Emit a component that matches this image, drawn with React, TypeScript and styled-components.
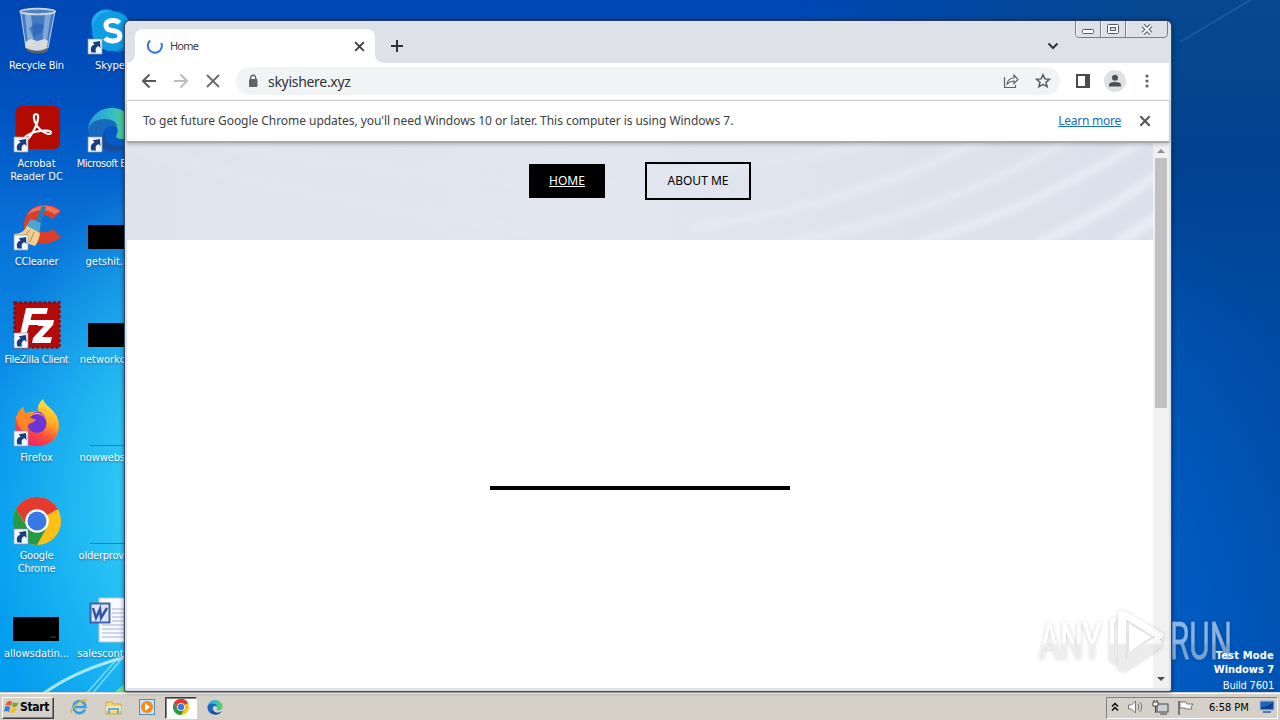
import React from "react";
import styled, { createGlobalStyle } from "styled-components";

const Global = createGlobalStyle`
  * { box-sizing: border-box; }
  html, body { margin: 0; padding: 0; overflow: hidden; }
  svg { display: block; flex: none; }
`;

const ui = `"DejaVu Sans Condensed", "DejaVu Sans", sans-serif`;
const web = `"Noto Sans", "Open Sans", sans-serif`;

const Screen = styled.div`
  position: relative;
  width: 1280px;
  height: 720px;
  display: flex;
  flex-direction: column;
  overflow: hidden;
  font-family: ${ui};
  font-size: 11px;
`;

const Desktop = styled.main`
  position: relative;
  height: 692px;
  flex: none;
  background:
    radial-gradient(ellipse 190px 330px at 175px 500px, #46dcf8 0%, rgba(50, 205, 246, 0.75) 38%, rgba(20, 170, 240, 0) 100%),
    linear-gradient(180deg, #0048b4 0%, #0050bf 14%, #0873d8 34%, #0a93ea 58%, #059fef 80%, #049cee 100%);
`;

const Dusk = styled.div`
  position: absolute;
  right: 0;
  top: 0;
  width: 480px;
  height: 692px;
  background:
    radial-gradient(ellipse 200px 420px at 320px 610px, rgba(0, 98, 204, 0.9), rgba(0, 80, 180, 0) 100%),
    linear-gradient(180deg, #07498f 0%, #004290 22%, #004ba4 50%, #0050b0 100%);
  mask-image: linear-gradient(90deg, transparent, #000 75%);
`;

const Rays = styled.svg`
  position: absolute;
  left: 0;
  top: 0;
`;

const IconGrid = styled.div`
  position: absolute;
  left: 0;
  top: 0;
  display: grid;
  grid-auto-flow: column;
  grid-template-rows: repeat(7, 98px);
  grid-template-columns: 73px 74px;
`;

const Shortcut = styled.div`
  display: flex;
  flex-direction: column;
  align-items: center;
  padding-top: 7px;
  white-space: nowrap;
`;

const Picture = styled.div`
  width: 48px;
  height: 48px;
  margin-left: 1px;
`;

const Label = styled.div<{ $ls?: number }>`
  margin-top: 4px;
  line-height: 13px;
  color: #fff;
  text-align: center;
  letter-spacing: ${(p) => p.$ls ?? 0}px;
  text-shadow: 0 1px 2px rgba(0, 20, 60, 0.45);
`;

const Window = styled.section`
  position: absolute;
  left: 124px;
  top: 20px;
  width: 1048px;
  height: 672px;
  display: flex;
  flex-direction: column;
  padding: 0 2px 3px;
  border: 1px solid #34495f;
  border-top-color: #20395c;
  border-radius: 6px 6px 3px 3px;
  background: #dee1e8;
  box-shadow: 0 0 4px rgba(0, 20, 50, 0.6);
  overflow: hidden;
`;

const TabStrip = styled.header`
  height: 42px;
  flex: none;
  display: flex;
  align-items: flex-end;
  padding-left: 8px;
  background: #dee1e8;
`;

const Tab = styled.div`
  position: relative;
  width: 240px;
  height: 34px;
  display: flex;
  align-items: center;
  padding: 0 9px 0 12px;
  border-radius: 8px 8px 0 0;
  background: #fff;
  color: #3c4043;
  &::before, &::after {
    content: "";
    position: absolute;
    bottom: 0;
    width: 8px;
    height: 8px;
  }
  &::before { left: -8px; background: radial-gradient(circle at 0 0, #dee1e8 7.5px, #fff 8px); }
  &::after { right: -8px; background: radial-gradient(circle at 100% 0, #dee1e8 7.5px, #fff 8px); }
`;

const TabTitle = styled.span`
  flex: 1;
  margin-left: 7px;
  padding-bottom: 2px;
  font-family: ${web};
  font-size: 11px;
  letter-spacing: -0.8px;
`;

const NewTab = styled.div`
  margin: 0 0 11px 16px;
`;

const TabSearch = styled.div`
  margin: 0 15px 12px auto;
`;

const Captions = styled.div`
  align-self: flex-start;
  display: flex;
  margin: -1px 1px 0 0;
  width: 93px;
  height: 18px;
  border: 1px solid #767e8a;
  border-radius: 0 0 4px 4px;
  overflow: hidden;
`;

const Caption = styled.div<{ $w: number }>`
  width: ${(p) => p.$w}px;
  display: flex;
  align-items: center;
  justify-content: center;
  box-shadow: inset 1px 0 0 #f4f6fa;
  & + & { border-left: 1px solid #767e8a; }
`;

const Toolbar = styled.div`
  height: 38px;
  flex: none;
  display: flex;
  align-items: center;
  padding: 0 0 1px 12px;
  background: #fff;
  border-bottom: 1px solid #d5d7da;
`;

const NavButtons = styled.div`
  display: flex;
  gap: 12px;
  width: 97px;
  flex: none;
`;

const Omnibox = styled.div`
  width: 824px;
  height: 28px;
  flex: none;
  display: flex;
  align-items: center;
  padding: 0 9px 0 11px;
  border-radius: 14px;
  background: #f1f3f4;
`;

const Url = styled.span`
  flex: 1;
  margin-left: 9px;
  color: #303134;
  font-family: ${web};
  font-size: 14px;
  letter-spacing: -0.3px;
`;

const OmniActions = styled.div`
  display: flex;
  gap: 16px;
`;

const ToolbarActions = styled.div`
  display: flex;
  align-items: center;
  gap: 14px;
  margin-left: 16px;
`;

const MenuDots = styled.svg`
  margin-left: 2px;
`;

const Infobar = styled.div`
  position: relative;
  z-index: 1;
  height: 42px;
  flex: none;
  display: flex;
  align-items: center;
  padding: 0 17px 1px 16px;
  background: #fff;
  border-bottom: 2px solid #a6a8a9;
  box-shadow: 0 1px 4px rgba(60, 64, 67, 0.35);
  color: #3c4043;
  font-family: ${web};
  font-size: 12px;
`;

const Message = styled.span`
  flex: 1;
  white-space: nowrap;
  letter-spacing: -0.05px;
`;

const Link = styled.span`
  margin-right: 17px;
  color: #1a69c8;
  text-decoration: underline;
  letter-spacing: -0.25px;
`;

const Viewport = styled.div`
  flex: 1;
  min-height: 0;
  display: flex;
  background: #fff;
`;

const Page = styled.div`
  flex: 1;
  display: flex;
  flex-direction: column;
  align-items: center;
`;

const Banner = styled.div`
  position: relative;
  width: 100%;
  height: 97px;
  flex: none;
  display: flex;
  justify-content: center;
  align-items: flex-start;
  gap: 40px;
  padding-top: 19px;
  background: linear-gradient(90deg, #dfe3ec, #e2e6ee 45%, #dfe3ec 70%, #dce0ec);
  overflow: hidden;
`;

const Streaks = styled.svg`
  position: absolute;
  left: 0;
  top: 0;
`;

const NavLink = styled.a<{ $current?: boolean }>`
  position: relative;
  display: flex;
  align-items: center;
  justify-content: center;
  width: ${(p) => (p.$current ? 76 : 106)}px;
  height: ${(p) => (p.$current ? 34 : 38)}px;
  margin-top: ${(p) => (p.$current ? 2 : 0)}px;
  padding-bottom: 1px;
  border: ${(p) => (p.$current ? "none" : "2px solid #000")};
  background: ${(p) => (p.$current ? "#000" : "transparent")};
  color: ${(p) => (p.$current ? "#fff" : "#000")};
  text-decoration: ${(p) => (p.$current ? "underline" : "none")};
  font-family: ${web};
  font-size: 12px;
  white-space: nowrap;
`;

const Divider = styled.div`
  width: 300px;
  height: 4px;
  margin-top: 246px;
  background: #000;
`;

const Scrollbar = styled.div`
  width: 16px;
  display: flex;
  flex-direction: column;
  align-items: center;
  background: #f1f1f1;
`;

const Arrow = styled.div<{ $down?: boolean }>`
  width: 16px;
  height: 15px;
  display: flex;
  align-items: center;
  justify-content: center;
  margin: ${(p) => (p.$down ? "auto 0 2px" : 0)};
`;

const Thumb = styled.div`
  width: 12px;
  height: 250px;
  background: #c1c1c1;
`;

const BuildInfo = styled.div`
  position: absolute;
  right: 6px;
  top: 649px;
  color: #fff;
  text-align: right;
  line-height: 14px;
  white-space: nowrap;
`;

const Strong = styled.div<{ $ls: number }>`
  font-weight: 700;
  letter-spacing: ${(p) => p.$ls}px;
`;

const BuildLine = styled.div`
  line-height: 18px;
  letter-spacing: -0.2px;
`;

const Watermark = styled.svg`
  position: absolute;
  left: 1030px;
  top: 602px;
`;

const Taskbar = styled.footer`
  flex: 1;
  display: flex;
  align-items: center;
  padding: 2px 2px 0 2px;
  background: #d5d0c8;
  border-top: 1px solid #d5d0c8;
  box-shadow: inset 0 1px 0 #fff;
`;

const Start = styled.div`
  width: 52px;
  height: 22px;
  display: flex;
  align-items: center;
  padding: 0 0 2px 1px;
  border: 1px solid;
  border-color: #fff #404040 #404040 #fff;
  box-shadow: inset -1px -1px 0 #808080;
  font-size: 12px;
  font-weight: 700;
  letter-spacing: -0.3px;
`;

const QuickLaunch = styled.div`
  display: flex;
  align-items: center;
  margin-left: 8px;
`;

const Slot = styled.div<{ $active?: boolean }>`
  width: ${(p) => (p.$active ? 32 : 34)}px;
  height: 22px;
  margin: ${(p) => (p.$active ? "0 1px" : 0)};
  padding-bottom: 1px;
  display: flex;
  align-items: center;
  justify-content: center;
  background: ${(p) => (p.$active ? "#fff" : "transparent")};
  border: ${(p) => (p.$active ? "1px solid" : "none")};
  border-color: #404040 #fff #fff #404040;
  box-shadow: ${(p) => (p.$active ? "inset 1px 1px 0 #808080" : "none")};
`;

const Tray = styled.div`
  width: 172px;
  height: 22px;
  margin-left: auto;
  display: flex;
  align-items: center;
  padding: 0 0 1px 4px;
  border: 1px solid;
  border-color: #808080 #fff #fff #808080;
`;

const TrayIcons = styled.div`
  display: flex;
  align-items: center;
  gap: 8px;
  width: 98px;
`;

const Clock = styled.div`
  width: 50px;
  white-space: nowrap;
  font-size: 11px;
`;

const LinkBadge = () => (
  <g transform="translate(1 32)">
    <rect width="14" height="15" fill="#f3f6fa" stroke="#8b9aac" strokeWidth=".7" />
    <path d="M3.500 13.500C1.800 9 3.600 6.500 6.500 5.500L4.800 3.200 12 2l.5 7-2.300-1.900C7.800 8.500 7 10.500 8 13.500z" fill="#173f7c" />
  </g>
);

const Art = ({ children, badge = true }: { children: React.ReactNode; badge?: boolean }) => (
  <Picture>
    <svg width="48" height="48" viewBox="0 0 48 48">
      {children}
      {badge && <LinkBadge />}
    </svg>
  </Picture>
);

const RecycleBin = () => (
  <Art badge={false}>
    <path d="M7.500 4 13 41q11 6 22 0L42 4z" fill="#6f9dcc" fillOpacity=".6" stroke="#b8d2ec" strokeWidth="1" />
    <path d="M12 7h6l3 32h-6z" fill="#d8eaf8" opacity=".45" />
    <path d="M32 7h6l-5 32h-4z" fill="#d8eaf8" opacity=".4" />
    <path d="m16 21 7-5 8 2-3 8-8 4z" fill="#1e5cae" opacity=".55" />
    <path d="m12 35 6-3 6 2 8-2 3 2-1 7q-10 5-21 0z" fill="#e6e3da" opacity=".9" />
    <path d="M13 41q11 6 22 0v3q-10 5-21 0z" fill="#59636c" />
    <ellipse cx="24.700" cy="4.500" rx="17.500" ry="2.800" fill="#4d83be" stroke="#ced6dd" strokeWidth="1.800" />
  </Art>
);

const Acrobat = () => (
  <Art>
    <rect x="2.500" y="1" width="44.500" height="43" rx="6" fill="#b30b00" />
    <path d="M12 35c-3-1 2-6 10-8s17-2 16 1-10-1-14-7-4-12-1-12 3 6-1 14-8 13-10 12z" fill="none" stroke="#fff" strokeWidth="2.200" />
  </Art>
);

const CCleaner = () => (
  <Art>
    <path d="M48 8C35-4 12 2 11 21s21 26 37 13l-8-8c-8 6-17 3-17-5s9-12 16-5z" fill="#dc3f29" />
    <path d="M47 8C35-1 19 2 14 12q15-9 28-.5z" fill="#ef7259" />
    <path d="m29 3 4 1-7 22-6-2z" fill="#267db5" />
    <path d="m18 16 10 4-2 11-14-6z" fill="#4fa5ce" />
    <path d="M14 23 27 30q-1 8-5 13L4 37 1 31q9 0 13-8z" fill="#f0cf91" />
    <path d="m17 27-8 8m12-6-4 10" stroke="#bd8c4a" fill="none" />
  </Art>
);

const FileZilla = () => (
  <Art>
    <rect x="1.500" y="1.500" width="45" height="45" fill="#b50a0a" stroke="#8e0b0b" strokeWidth="2.500" strokeDasharray="2.800 2" />
    <path d="M13 7h22l-1.500 6H19l-1.500 6H29l-1.500 5H16l-4 14H6z" fill="#fff" />
    <path d="M26 19h15l-1 5-11 12h10l-1.500 6H19l1-5 11-12h-6z" fill="#fff" />
  </Art>
);

const Firefox = () => (
  <Art>
    <defs>
      <linearGradient id="fox" x1=".8" y1="0" x2=".3" y2="1">
        <stop offset="0" stopColor="#fff04a" />
        <stop offset=".4" stopColor="#ffab26" />
        <stop offset=".7" stopColor="#ff4b3c" />
        <stop offset="1" stopColor="#ed1c72" />
      </linearGradient>
    </defs>
    <path d="M30 0q1 4 6 8 10 8 10 19c0 12-9 20-22 20S2 38 2 26q0-9 6-16l2-2 2 6 6-1q4-1 7-1-1-7 5-12z" fill="url(#fox)" />
    <circle cx="24" cy="24.500" r="9.500" fill="#6b35d9" />
    <path d="M18 15q11-4 15 6-1-5-5-8-5-2-10 2z" fill="#9b3fd4" />
    <path d="M3 18q4-9 7-10l2 6 7 0-2 4q1 2 6 2-1 3-5 4-5 2-3 8Q6 34 3 18z" fill="#ff8a24" opacity=".9" />
  </Art>
);

const ChromeArt = () => (
  <>
    <circle cx="24" cy="24" r="24" fill="#fbc116" />
    <path d="M24 24 3.200 12A24 24 0 0 1 44.800 12z" fill="#e33b2e" />
    <path d="M24 13h20.800A24 24 0 0 0 3.200 12L14.500 30z" fill="#e33b2e" />
    <path d="M3.200 12A24 24 0 0 0 24 48l10-18H14z" fill="#269a49" />
    <circle cx="24" cy="24" r="11.800" fill="#fff" />
    <circle cx="24" cy="24" r="9.500" fill="#3b78e7" />
  </>
);

const EdgeArt = ({ id }: { id: string }) => (
  <>
    <defs>
      <linearGradient id={id} x1="0" x2="1">
        <stop stopColor="#2699df" />
        <stop offset=".55" stopColor="#35bfc4" />
        <stop offset="1" stopColor="#65d34c" />
      </linearGradient>
    </defs>
    <path d="M1 24A23.500 23.500 0 0 1 47 20c1 9-5 14-12 14-5 0-7-2-5-5 2-4 0-9-6-9z" fill={`url(#${id})`} />
    <path d="M1 24q4-10 16-10 13 0 13 9-10-5-13 4-3 12 9 18Q3 49 1 24z" fill="#1769bd" />
    <path d="M18 26q-2 14 14 15 8 0 13-5-6 11-20 11Q7 44 18 26z" fill="#174e9b" />
  </>
);

const Skype = () => (
  <Art>
    <circle cx="19" cy="17" r="14.500" fill="#20aef0" />
    <circle cx="31" cy="30" r="15" fill="#087ecb" />
    <circle cx="25" cy="24" r="20" fill="#0c9de4" />
    <path d="M32.500 16q-3-3-7.500-2.500-6 .7-6 5t6.500 5q7.500 1 7.500 5.500 0 4.500-7 5-5.500 0-8-3" fill="none" stroke="#fff" strokeWidth="5" />
  </Art>
);

const Console = ({ mark }: { mark?: boolean }) => (
  <Art badge={false}>
    <rect x={mark ? 0 : 1} y="22" width="46" height="24" fill="#000" />
    {mark && <path d="M37 42h6" stroke="#444" />}
  </Art>
);

const ThinConsole = () => (
  <Art badge={false}>
    <path d="M3 46.500h45" stroke="#247c9c" />
  </Art>
);

const WordDoc = () => (
  <Art badge={false}>
    <path d="M12 3h36v44H12z" fill="#f8faff" stroke="#b8c8e0" />
    <path d="M25 14h20M25 18h20M25 22h20M25 26h20M15 30h30M15 34h30M15 38h30M15 42h30" stroke="#9fb3db" />
    <rect x="3.500" y="8.500" width="19" height="19" fill="#dce6f8" stroke="#3e62ae" strokeWidth="2" />
    <path d="m6 13 3 10 4-9 1 9 6-10" fill="none" stroke="#2f55a4" strokeWidth="2.500" />
  </Art>
);

const Cross = ({ size, stroke, color }: { size: number; stroke: number; color: string }) => (
  <svg width={size} height={size} viewBox="0 0 12 12">
    <path d="m2 2 8 8m0-8-8 8" stroke={color} strokeWidth={stroke} />
  </svg>
);

const shortcuts: { label: string[]; art: React.ReactNode; ls?: number }[] = [
  { label: ["Recycle Bin"], art: <RecycleBin />, ls: -0.2 },
  { label: ["Acrobat", "Reader DC"], art: <Acrobat /> },
  { label: ["CCleaner"], art: <CCleaner />, ls: -0.2 },
  { label: ["FileZilla Client"], art: <FileZilla />, ls: -0.35 },
  { label: ["Firefox"], art: <Firefox /> },
  { label: ["Google", "Chrome"], art: <Art><ChromeArt /></Art>, ls: -0.2 },
  { label: ["allowsdatin..."], art: <Console mark />, ls: -0.05 },
  { label: ["Skype"], art: <Skype /> },
  { label: ["Microsoft Edge"], art: <Art><EdgeArt id="edge-desktop" /></Art>, ls: -0.45 },
  { label: ["getshit.rtf"], art: <Console /> },
  { label: ["networkco..."], art: <Console />, ls: -0.05 },
  { label: ["nowwebsit..."], art: <ThinConsole />, ls: -0.1 },
  { label: ["olderprovid..."], art: <ThinConsole />, ls: -0.2 },
  { label: ["salescontra..."], art: <WordDoc />, ls: -0.05 },
];

export default function App() {
  return (
    <Screen>
      <Global />
      <Desktop>
        <Dusk />
        <Rays width="1280" height="692">
          <path d="M40 696Q75 670 126 657" stroke="#d8fbff" strokeWidth="3" opacity=".75" fill="none" />
          <path d="M86 694 116 660M92 694 124 656" stroke="#b8f5ff" strokeWidth="1.500" opacity=".6" />
          <path d="m115 692 10-9v9z" fill="#64e38b" />
          <path d="m1180 42 72-43" stroke="#5d9dd6" strokeWidth="2" opacity=".2" />
        </Rays>
        <IconGrid>
          {shortcuts.map((s) => (
            <Shortcut key={s.label[0]}>
              {s.art}
              <Label $ls={s.ls}>
                {s.label.map((line) => <div key={line}>{line}</div>)}
              </Label>
            </Shortcut>
          ))}
        </IconGrid>

        <Window>
          <TabStrip>
            <Tab>
              <svg width="16" height="16" viewBox="0 0 16 16">
                <path d="M3.200 2.500A7 7 0 1 0 14.300 5" fill="none" stroke="#3474e0" strokeWidth="2" />
              </svg>
              <TabTitle>Home</TabTitle>
              <Cross size={13} stroke={1.8} color="#3c4043" />
            </Tab>
            <NewTab>
              <svg width="12" height="12"><path d="M6 0v12M0 6h12" stroke="#303338" strokeWidth="2" /></svg>
            </NewTab>
            <TabSearch>
              <svg width="14" height="10"><path d="m2.500 2.500 4.500 4.500 4.500-4.500" fill="none" stroke="#303338" strokeWidth="2" /></svg>
            </TabSearch>
            <Captions>
              <Caption $w={24}>
                <svg width="14" height="12"><rect x="1.500" y="6.500" width="11" height="4" rx="1" fill="#fff" stroke="#535a66" /></svg>
              </Caption>
              <Caption $w={25}>
                <svg width="12" height="10"><rect x=".5" y=".5" width="11" height="9" rx="1" fill="#fff" stroke="#535a66" /><rect x="3.500" y="3.500" width="5" height="3" fill="#dee1e8" stroke="#535a66" /></svg>
              </Caption>
              <Caption $w={42}>
                <svg width="14" height="11"><path d="m3 1.500 8 8m0-8-8 8" stroke="#535a66" strokeWidth="4" /><path d="m3 1.500 8 8m0-8-8 8" stroke="#fff" strokeWidth="2" /></svg>
              </Caption>
            </Captions>
          </TabStrip>

          <Toolbar>
            <NavButtons>
              <svg width="20" height="20"><path d="M17 10H4m6.500-6.500L4 10l6.500 6.500" fill="none" stroke="#55595e" strokeWidth="2" /></svg>
              <svg width="20" height="20"><path d="M3 10h13M9.500 3.500 16 10l-6.500 6.500" fill="none" stroke="#babcbe" strokeWidth="2" /></svg>
              <svg width="20" height="20"><path d="m4 4 12 12m0-12L4 16" stroke="#65696e" strokeWidth="1.800" /></svg>
            </NavButtons>
            <Omnibox>
              <svg width="12" height="14"><rect x="2" y="5" width="8.500" height="8" rx="1" fill="#5f6368" /><path d="M3.700 6V3.800a2.500 2.500 0 0 1 5 0V6" fill="none" stroke="#5f6368" strokeWidth="1.400" /></svg>
              <Url>skyishere.xyz</Url>
              <OmniActions>
                <svg width="16" height="16"><path d="M1.500 4v10.500h11V12M4 11q1-6 7-6V2l4 4.500-4 4V8Q7 8 4 11z" fill="none" stroke="#5f6368" strokeWidth="1.200" /></svg>
                <svg width="16" height="16"><path d="m8 1.700 1.900 4.200 4.600.4-3.500 3 1.100 4.500L8 11.400l-4.100 2.400L5 9.300l-3.500-3 4.600-.4z" fill="none" stroke="#55595e" strokeWidth="1.500" /></svg>
              </OmniActions>
            </Omnibox>
            <ToolbarActions>
              <svg width="14" height="14"><path d="M1 1h12v12H1z" fill="#fff" stroke="#484b50" strokeWidth="2" /><path d="M9 1h4v12H9z" fill="#484b50" /></svg>
              <svg width="22" height="22"><circle cx="11" cy="11" r="11" fill="#dde1e6" /><circle cx="11" cy="7.800" r="3" fill="#4b5056" /><path d="M5 16.500v-1.500q0-3 6-3t6 3v1.500z" fill="#4b5056" /></svg>
              <MenuDots width="16" height="16"><circle cx="5" cy="3" r="1.600" fill="#5f6368" /><circle cx="5" cy="8" r="1.600" fill="#5f6368" /><circle cx="5" cy="13" r="1.600" fill="#5f6368" /></MenuDots>
            </ToolbarActions>
          </Toolbar>

          <Infobar>
            <Message>To get future Google Chrome updates, you'll need Windows 10 or later. This computer is using Windows 7.</Message>
            <Link>Learn more</Link>
            <Cross size={14} stroke={1.8} color="#55595e" />
          </Infobar>

          <Viewport>
            <Page>
              <Banner>
                <Streaks width="1026" height="97">
                  <defs><filter id="soft"><feGaussianBlur stdDeviation="3" /></filter></defs>
                  <g fill="none" stroke="#e9edf7" filter="url(#soft)">
                    <path d="M560 85Q720 65 860-5" strokeWidth="9" opacity=".65" />
                    <path d="M660 100Q820 70 945-5" strokeWidth="9" opacity=".65" />
                    <path d="M790 100Q910 65 1025-8" strokeWidth="9" opacity=".8" />
                    <path d="M910 100Q980 70 1040 25" strokeWidth="10" opacity=".9" />
                    <path d="m990 100 50-32" strokeWidth="11" />
                    <path d="M0 0Q160 55 420 90M90 0q180 35 400 45" strokeWidth="14" opacity=".25" />
                    <path d="M540 30Q650 25 760-5" strokeWidth="8" opacity=".5" />
                  </g>
                </Streaks>
                <NavLink $current>HOME</NavLink>
                <NavLink>ABOUT ME</NavLink>
              </Banner>
              <Divider />
            </Page>
            <Scrollbar>
              <Arrow><svg width="8" height="4"><path d="m0 4 4-4 4 4z" fill="#8b8b8b" /></svg></Arrow>
              <Thumb />
              <Arrow $down><svg width="8" height="4"><path d="m0 0 4 4 4-4z" fill="#4d4d4d" /></svg></Arrow>
            </Scrollbar>
          </Viewport>
        </Window>

        <Watermark width="210" height="80">
          <defs>
            <filter id="halo" x="-10%" y="-10%" width="120%" height="125%">
              <feDropShadow dx="0" dy="0.500" stdDeviation="2" floodColor="#000" floodOpacity=".38" />
            </filter>
            <linearGradient id="fade" gradientUnits="userSpaceOnUse" x1="0" y1="10" x2="0" y2="70">
              <stop offset=".5" stopColor="#fff" />
              <stop offset=".56" stopColor="#dedede" />
            </linearGradient>
          </defs>
          <g filter="url(#halo)" fill="url(#fade)" opacity=".55" fontFamily="Roboto, sans-serif" fontSize="52">
            <text x="9" y="57" textLength="63" lengthAdjust="spacingAndGlyphs">ANY</text>
            <text x="140" y="57" textLength="62" lengthAdjust="spacingAndGlyphs" stroke="#fff" strokeOpacity=".5" strokeWidth=".8">RUN</text>
            <path d="M80 19q1-3 6-3v4h-2v37h2v4q-6 0-6-4z" />
            <path d="M88 13q1-5 6-4l4 2 35 21-1 4-4 1-32-20v40l32-19 3 1 1 5-36 24q-6 2-8-3z" />
            <path d="m99 22 22 13-22 15z" fill="#fff" />
            <path d="m97 51 31-17 2 4-33 20z" />
          </g>
        </Watermark>
        <BuildInfo>
          <Strong $ls={0.2}>Test Mode</Strong>
          <Strong $ls={-0.05}>Windows 7</Strong>
          <BuildLine>Build 7601</BuildLine>
        </BuildInfo>
      </Desktop>

      <Taskbar>
        <Start>
          <svg width="16" height="16">
            <path d="M3 3q3-2 5 0L7 7Q4 5 1 7z" fill="#e85b24" />
            <path d="M9 3q3 2 6 0l-2 4q-3 2-5 0z" fill="#72ad2c" />
            <path d="M1 8q3-2 5 0l-1 5q-3-2-5 0z" fill="#367fc9" />
            <path d="M8 8q2 2 5 0l-2 5q-3 2-5 0z" fill="#f3bd23" />
          </svg>
          Start
        </Start>
        <QuickLaunch>
          <Slot>
            <svg width="18" height="18" viewBox="0 0 18 18"><path d="M15 11.500A6 6 0 1 1 15.500 9H5" fill="none" stroke="#3aa0df" strokeWidth="2.600" /><path d="M2 15Q-1 12 7 6t10-3" fill="none" stroke="#e4b43a" strokeWidth="1.400" /></svg>
          </Slot>
          <Slot>
            <svg width="17" height="16"><path d="M1 3h6l1 2h8v10H1z" fill="#f3d47a" stroke="#c6a553" /><path d="M1 7h15v5H1z" fill="#f9e7a0" /><path d="M4 15v-5h9v5" fill="none" stroke="#65afd8" strokeWidth="2" /></svg>
          </Slot>
          <Slot>
            <svg width="16" height="16"><rect x=".5" y=".5" width="15" height="15" fill="#cde2f4" stroke="#548bb9" /><circle cx="8" cy="8" r="6" fill="#f28a1d" /><path d="m6 4 5 4-5 4z" fill="#fff" /></svg>
          </Slot>
          <Slot $active><svg width="16" height="16" viewBox="0 0 48 48"><ChromeArt /></svg></Slot>
          <Slot><svg width="16" height="16" viewBox="0 0 48 48"><EdgeArt id="edge-task" /></svg></Slot>
        </QuickLaunch>
        <Tray>
          <TrayIcons>
            <svg width="8" height="10"><path d="m1 4.500 3-3 3 3m-6 4 3-3 3 3" fill="none" stroke="#000" strokeWidth="1.400" /></svg>
            <svg width="17" height="14"><path d="M1.500 5v4h3l4 4V1l-4 4z" fill="#fff" stroke="#777" /><path d="M11 4q2 3 0 6M13 2q3.500 5 0 10" fill="none" stroke="#777" /></svg>
            <svg width="17" height="15"><rect x="5" y="4" width="11" height="8" fill="#c9d1d6" stroke="#444" /><path d="M8 14h7M1 2h5v4H1zM2 0v2m3-2v2M3.500 6v7" fill="#fff" stroke="#444" /></svg>
            <svg width="17" height="15"><path d="M2 1v14" stroke="#777" strokeWidth="2" /><path d="M3 2h6l1 2h6l-2 3 1 2H9L8 8H3z" fill="#fff" stroke="#777" /></svg>
          </TrayIcons>
          <Clock>6:58 PM</Clock>
          <svg width="16" height="14"><path d="M1 1h14v9H1z" fill="#1e65bc" stroke="#97b9df" /><path d="M2 7q7 0 12-5v7H2z" fill="#123f91" /><path d="M4 12h8" stroke="#537ba8" strokeWidth="2" /></svg>
        </Tray>
      </Taskbar>
    </Screen>
  );
}
